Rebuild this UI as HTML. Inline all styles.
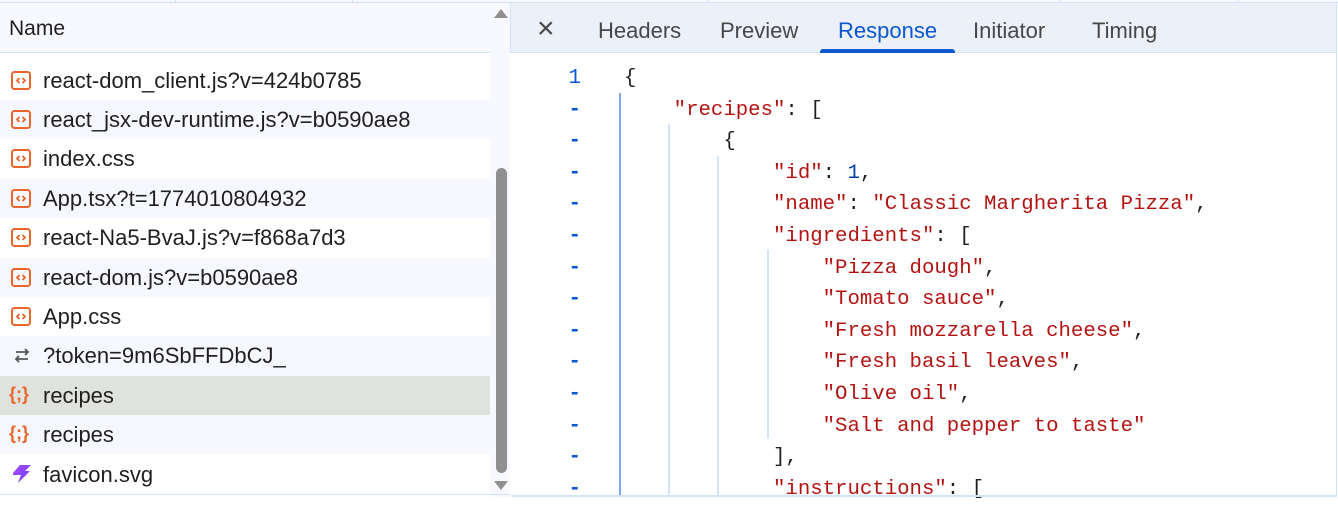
<!DOCTYPE html>
<html><head><meta charset="utf-8"><style>
*{margin:0;padding:0;box-sizing:border-box}
body{width:1338px;height:497px;overflow:hidden;background:#fff;font-family:"Liberation Sans",sans-serif;position:relative}
.top{position:absolute;left:0;top:0;width:1338px;height:3px;background:#f8f9fe;border-bottom:1px solid #d3e3fd}
.top i{position:absolute;top:0;width:1px;height:3px;background:#d3e3fd}
.lh{position:absolute;left:0;top:3px;width:490px;height:50px;background:#f8f9fe;border-bottom:1px solid #d3e3fd;font-size:21px;color:#1f1f1f;padding:14px 0 0 9px}
.row{position:absolute;left:0;width:490px;height:39.4px;font-size:22px;color:#1f1f1f;padding:7px 0 0 43px;white-space:nowrap}
.alt{background:#f6f8fd}
.sel{background:#e0e2de}
.ic{position:absolute;left:11px;top:10px}
.sb{position:absolute;left:490px;top:3px;width:20px;height:494px;background:#f8f9fe}
.thumb{position:absolute;left:496px;top:168px;width:11px;height:305px;background:#8f8f8f;border-radius:6px}
.rt{position:absolute;left:510px;top:3px;width:826px;height:50px;background:#ecf0f9;border-bottom:1px solid #d3e3fd;border-left:1px solid #d3e3fd}
.tab{position:absolute;top:15px;font-size:22px;color:#474747}
.code{position:absolute;left:511px;top:63px;font-family:"Liberation Mono",monospace;font-size:20.7px;line-height:31.6px}
.ln{position:absolute;left:0;width:70px;text-align:right;color:#0b57d0;font-family:"Liberation Mono",monospace;font-size:20.8px}
.ln.d{font-weight:bold}
.s{color:#b31412}.n{color:#0842a0}.p{color:#1f1f1f}
.g{position:absolute;width:2px;background:#d3e3fd}
</style></head><body>
<div class="top"><i style="left:175px"></i><i style="left:352px"></i><i style="left:708px"></i><i style="left:1059px"></i><i style="left:1238px"></i></div>
<div class="lh">Name</div>
<svg width="0" height="0" style="position:absolute"><defs><g id="js"><rect x="1" y="1" width="18" height="17" rx="2.5" fill="none" stroke="#e8652b" stroke-width="2"/><path d="M8.5 7 L6 9.5 L8.5 12 M11.5 7 L14 9.5 L11.5 12" fill="none" stroke="#e8652b" stroke-width="1.8"/></g></defs></svg>
<div class="row" style="top:60.5px"><svg class="ic" width="20" height="19"><use href="#js"/></svg>react-dom_client.js?v=424b0785</div>
<div class="row alt" style="top:99.9px"><svg class="ic" width="20" height="19"><use href="#js"/></svg>react_jsx-dev-runtime.js?v=b0590ae8</div>
<div class="row" style="top:139.3px"><svg class="ic" width="20" height="19"><use href="#js"/></svg>index.css</div>
<div class="row alt" style="top:178.7px"><svg class="ic" width="20" height="19"><use href="#js"/></svg>App.tsx?t=1774010804932</div>
<div class="row" style="top:218.1px"><svg class="ic" width="20" height="19"><use href="#js"/></svg>react-Na5-BvaJ.js?v=f868a7d3</div>
<div class="row alt" style="top:257.5px"><svg class="ic" width="20" height="19"><use href="#js"/></svg>react-dom.js?v=b0590ae8</div>
<div class="row" style="top:296.9px"><svg class="ic" width="20" height="19"><use href="#js"/></svg>App.css</div>
<div class="row alt" style="top:336.3px"><svg class="ic" width="20" height="19" style="left:12px"><path d="M4 6 H16 M13 3 L16 6 L13 9 M16 13 H4 M7 10 L4 13 L7 16" fill="none" stroke="#555" stroke-width="1.8"/></svg>?token=9m6SbFFDbCJ_</div>
<div class="row sel" style="top:375.7px"><span style="position:absolute;left:9px;top:8px;color:#e8652b;font-size:18px;font-weight:bold">{;}</span>recipes</div>
<div class="row alt" style="top:415.1px"><span style="position:absolute;left:9px;top:8px;color:#e8652b;font-size:18px;font-weight:bold">{;}</span>recipes</div>
<div class="row" style="top:454.5px"><svg class="ic" width="22" height="20" style="top:9px"><defs><linearGradient id="fg" x1="0" y1="0" x2="1" y2="1"><stop offset="0" stop-color="#a64dff"/><stop offset="1" stop-color="#6b3dff"/></linearGradient></defs><path d="M2 9 L9 1 H20 L14 7 H19 L7 19 L10 11 H2 Z" fill="url(#fg)"/></svg>favicon.svg</div>
<div class="sb"></div>
<div style="position:absolute;left:494px;top:9px;width:0;height:0;border-left:7px solid transparent;border-right:7px solid transparent;border-bottom:9px solid #8f8f8f"></div>
<div style="position:absolute;left:494px;top:481px;width:0;height:0;border-left:7px solid transparent;border-right:7px solid transparent;border-top:9px solid #8f8f8f"></div>
<div class="thumb"></div>
<div style="position:absolute;left:0;top:494px;width:510px;height:1px;background:#d3e3fd"></div>
<div class="rt">
<div class="tab" style="left:26px;top:9px;font-size:30px;color:#474747">×</div>
<div class="tab" style="left:87px">Headers</div>
<div class="tab" style="left:209px">Preview</div>
<div class="tab" style="left:327px;color:#0b57d0">Response</div>
<div style="position:absolute;left:309px;top:46px;width:135px;height:4px;background:#0b57d0;border-radius:3px 3px 0 0"></div>
<div class="tab" style="left:462px">Initiator</div>
<div class="tab" style="left:581px">Timing</div>
</div>
<div style="position:absolute;left:1336px;top:3px;width:1px;height:494px;background:#d3e3fd"></div>
<div class="g" style="left:619px;top:93px;height:404px;background:#7ea6f0"></div>
<div class="g" style="left:668px;top:124px;height:373px"></div>
<div class="g" style="left:717px;top:156px;height:341px"></div>
<div class="g" style="left:767px;top:250px;height:188px"></div>
<div style="position:absolute;left:511px;top:63px;line-height:31.6px">
<div class="ln" style="position:relative">1</div>
<div class="ln d" style="position:relative">-</div><div class="ln d" style="position:relative">-</div><div class="ln d" style="position:relative">-</div><div class="ln d" style="position:relative">-</div><div class="ln d" style="position:relative">-</div><div class="ln d" style="position:relative">-</div><div class="ln d" style="position:relative">-</div><div class="ln d" style="position:relative">-</div><div class="ln d" style="position:relative">-</div><div class="ln d" style="position:relative">-</div><div class="ln d" style="position:relative">-</div><div class="ln d" style="position:relative">-</div><div class="ln d" style="position:relative">-</div>
</div>
<pre class="code" style="left:624px"><span class="p">{</span>
    <span class="s">"recipes"</span><span class="p">: [</span>
        <span class="p">{</span>
            <span class="s">"id"</span><span class="p">: </span><span class="n">1</span><span class="p">,</span>
            <span class="s">"name"</span><span class="p">: </span><span class="s">"Classic Margherita Pizza"</span><span class="p">,</span>
            <span class="s">"ingredients"</span><span class="p">: [</span>
                <span class="s">"Pizza dough"</span><span class="p">,</span>
                <span class="s">"Tomato sauce"</span><span class="p">,</span>
                <span class="s">"Fresh mozzarella cheese"</span><span class="p">,</span>
                <span class="s">"Fresh basil leaves"</span><span class="p">,</span>
                <span class="s">"Olive oil"</span><span class="p">,</span>
                <span class="s">"Salt and pepper to taste"</span>
            <span class="p">],</span>
            <span class="s">"instructions"</span><span class="p">: [</span></pre>
<div style="position:absolute;left:511px;top:495px;width:825px;height:2px;background:#d3e3fd"></div>
</body></html>
